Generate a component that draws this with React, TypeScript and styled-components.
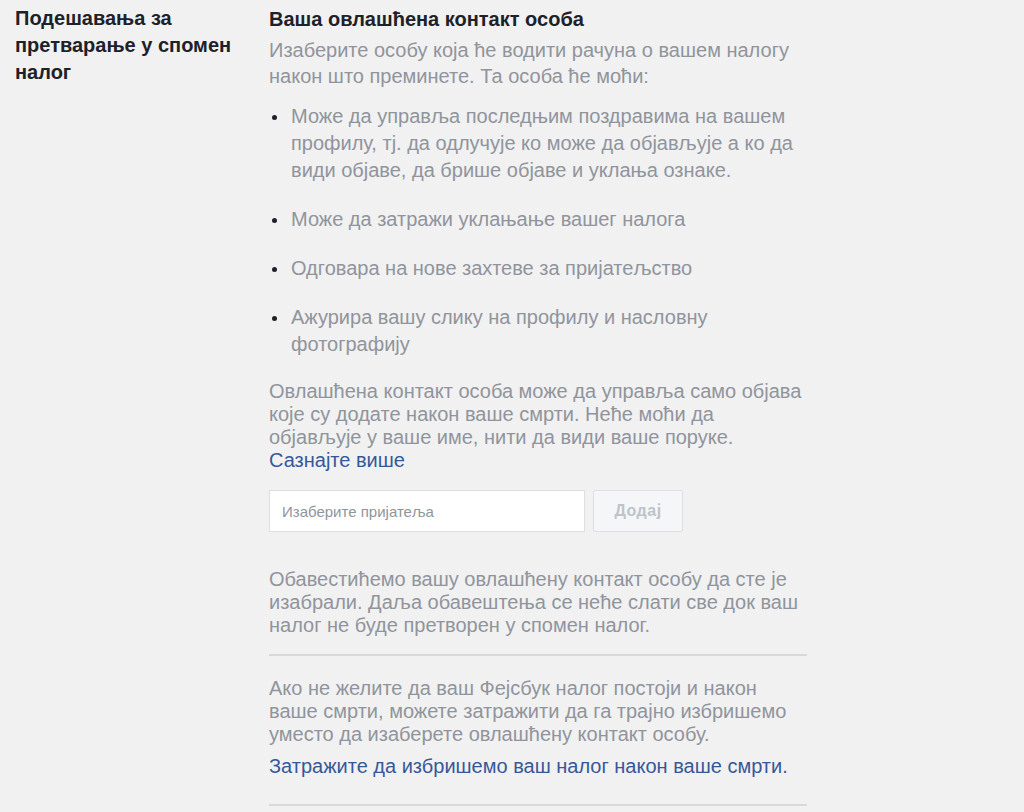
import React from "react";
import styled, { createGlobalStyle } from "styled-components";

const Global = createGlobalStyle`
  html, body { margin: 0; padding: 0; background: #f1f1f1; }
  body { font-family: "Liberation Sans", Arial, sans-serif; }
`;

const Page = styled.div`
  display: grid;
  grid-template-columns: 254px 538px;
  align-items: start;
  padding: 7px 0 0 15px;
  min-height: 805px;
  background: #f1f1f1;
`;

const SideLabel = styled.div`
  font-size: 20px;
  font-weight: bold;
  line-height: 27px;
  color: #1d2129;
  margin-top: -2px;
  width: 235px;
`;

const Content = styled.div`
  display: flex;
  flex-direction: column;
`;

const Heading = styled.div`
  font-size: 20px;
  font-weight: bold;
  line-height: 24px;
  color: #1d2129;
`;

const Text = styled.p<{ $lh?: number; $mt?: number }>`
  margin: ${(p) => p.$mt ?? 0}px 0 0;
  font-size: 20px;
  line-height: ${(p) => p.$lh ?? 23}px;
  color: #90949c;
`;

const List = styled.ul`
  list-style: none;
  margin: 14px 0 0;
  padding: 0;
  display: flex;
  flex-direction: column;
  gap: 22px;
`;

const Item = styled.li`
  position: relative;
  padding-left: 22px;
  font-size: 20px;
  line-height: 27px;
  color: #90949c;
  &::before {
    content: "";
    position: absolute;
    left: 3px;
    top: 12px;
    width: 5px;
    height: 5px;
    border-radius: 50%;
    background: #1d2129;
  }
`;

const Link = styled.a`
  color: #365899;
  text-decoration: none;
  cursor: pointer;
`;

const PickerRow = styled.div`
  display: flex;
  gap: 8px;
  margin-top: 18px;
`;

const Input = styled.div`
  box-sizing: border-box;
  width: 316px;
  height: 42px;
  background: #fff;
  border: 1px solid #dddfe2;
  display: flex;
  align-items: center;
  padding-left: 12px;
  font-size: 15px;
  color: #90949c;
`;

const Button = styled.div`
  box-sizing: border-box;
  width: 90px;
  height: 42px;
  background: #f5f6f7;
  border: 1px solid #dddfe2;
  border-radius: 2px;
  display: flex;
  align-items: center;
  justify-content: center;
  font-size: 16px;
  letter-spacing: 0.5px;
  font-weight: bold;
  color: #bec3c9;
`;

const Divider = styled.hr<{ $mt: number }>`
  border: 0;
  border-top: 2px solid #d8d9db;
  margin: ${(p) => p.$mt}px 0 0;
  width: 538px;
`;

export default function App() {
  return (
    <>
      <Global />
      <Page>
        <SideLabel>Подешавања за претварање у спомен налог</SideLabel>
        <Content>
          <Heading>Ваша овлашћена контакт особа</Heading>
          <Text $lh={26} $mt={6}>
            Изаберите особу која ће водити рачуна о вашем налогу након што
            преминете. Та особа ће моћи:
          </Text>
          <List>
            <Item>
              Може да управља последњим поздравима на вашем профилу, тј. да
              одлучује ко може да објављује а ко да види објаве, да брише
              објаве и уклања ознаке.
            </Item>
            <Item>Може да затражи уклањање вашег налога</Item>
            <Item>Одговара на нове захтеве за пријатељство</Item>
            <Item>Ажурира вашу слику на профилу и насловну фотографију</Item>
          </List>
          <Text $mt={22}>
            Овлашћена контакт особа може да управља само објава које су
            додате након ваше смрти. Неће моћи да објављује у ваше име, нити
            да види ваше поруке.
            <br />
            <Link>Сазнајте више</Link>
          </Text>
          <PickerRow>
            <Input>Изаберите пријатеља</Input>
            <Button>Додај</Button>
          </PickerRow>
          <Text $mt={36}>
            Обавестићемо вашу овлашћену контакт особу да сте је изабрали.
            Даља обавештења се неће слати све док ваш налог не буде претворен
            у спомен налог.
          </Text>
          <Divider $mt={17} />
          <Text $mt={21}>
            Ако не желите да ваш Фејсбук налог постоји и након ваше смрти,
            можете затражити да га трајно избришемо уместо да изаберете
            овлашћену контакт особу.
          </Text>
          <Text $mt={9}>
            <Link>Затражите да избришемо ваш налог након ваше смрти.</Link>
          </Text>
          <Divider $mt={26} />
        </Content>
      </Page>
    </>
  );
}
